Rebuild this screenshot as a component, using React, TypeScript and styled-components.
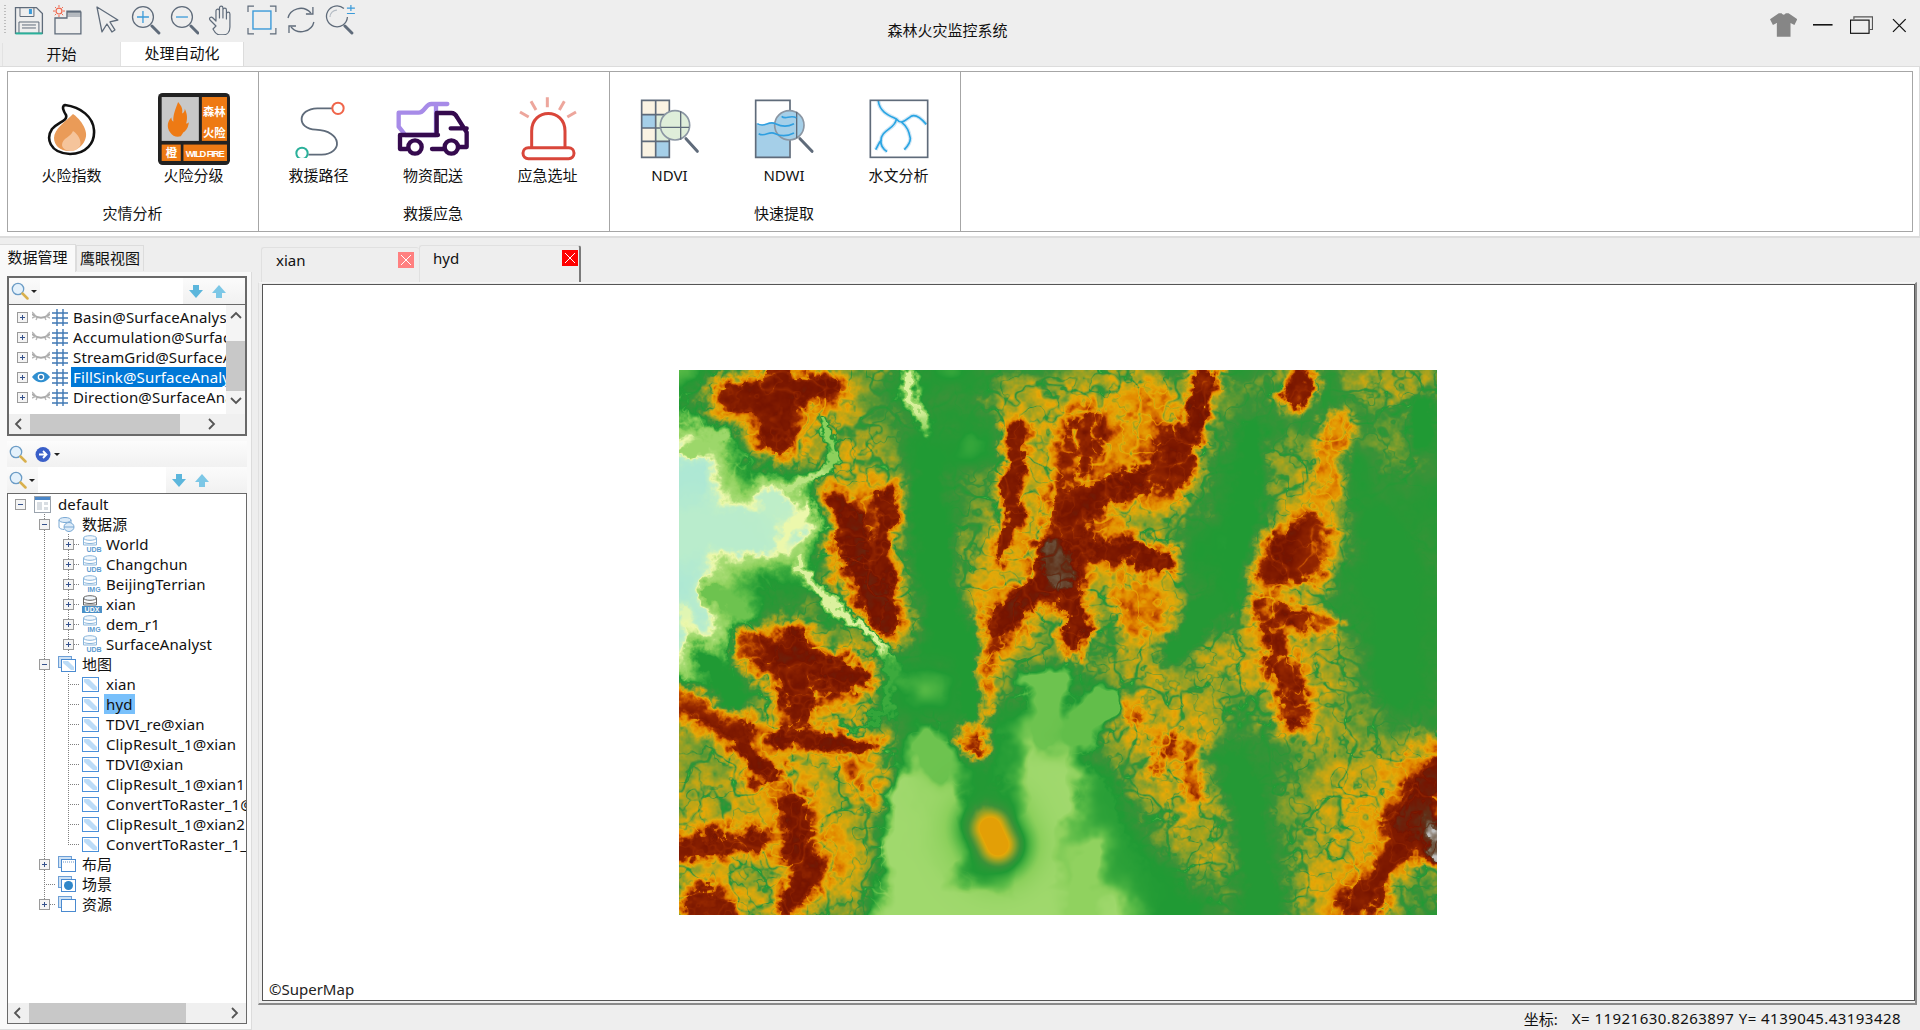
import React, { useLayoutEffect, useRef } from "react";
import styled, { createGlobalStyle } from "styled-components";

const GlobalStyle = createGlobalStyle`
  html, body { margin: 0; padding: 0; background: #eeeeee; overflow: hidden; }
  body { font-family: "Noto Sans", "Noto Sans CJK SC", sans-serif; font-size: 15px; color: #111; }
`;

/* ---------- terrain drawn at runtime ---------- */
type Seg = [number, number, number, number, number, number];

const BROAD: Seg[] = [
  [0.62, 0.62, 0.72, 0.85, 0.56, 62], [0.74, 0.5, 0.88, 0.58, 0.55, 55], [0.8, 0.2, 0.87, 0.3, 0.5, 36],
  [0.56, 0.1, 0.62, 0.22, 0.58, 40], [0.44, 0.05, 0.58, 0.03, 0.52, 34], [0.12, 0.75, 0.22, 0.9, 0.6, 60],
  [0.02, 0.8, 0.06, 0.92, 0.52, 42], [0.55, 0.28, 0.62, 0.45, 0.58, 40], [0.92, 0.75, 0.86, 0.95, 0.56, 56],
  [0.07, 0.08, 0.2, 0.12, 0.52, 34], [0.25, 0.2, 0.27, 0.45, 0.55, 36], [0.15, 0.55, 0.2, 0.62, 0.56, 44],
  [0.9, 0.0, 0.98, 0.04, 0.52, 30], [0.4, 0.35, 0.43, 0.5, 0.56, 34], [0.36, 0.34, 0.37, 0.42, 0.54, 22],
];

const HILLS: Seg[] = [
  [0.07, 0.05, 0.19, 0.03, 0.84, 24], [0.135, 0.0, 0.13, 0.13, 0.84, 20],
  [0.21, 0.25, 0.27, 0.47, 0.86, 20], [0.27, 0.24, 0.265, 0.4, 0.84, 15],
  [0.09, 0.515, 0.22, 0.56, 0.85, 22], [0.15, 0.5, 0.16, 0.62, 0.84, 20],
  [0.0, 0.6, 0.08, 0.66, 0.84, 20], [0.13, 0.67, 0.25, 0.69, 0.84, 12], [0.08, 0.7, 0.12, 0.74, 0.84, 12],
  [0.0, 0.87, 0.1, 0.86, 0.82, 14], [0.15, 0.8, 0.15, 0.87, 0.84, 17], [0.17, 0.9, 0.15, 0.97, 0.84, 18],
  [0.03, 0.98, 0.06, 1.0, 0.82, 22], [0.24, 0.72, 0.26, 0.76, 0.7, 22],
  [0.5, 0.33, 0.5, 0.37, 0.94, 26], [0.45, 0.12, 0.43, 0.33, 0.82, 14], [0.54, 0.11, 0.51, 0.26, 0.78, 26],
  [0.61, 0.2, 0.51, 0.27, 0.84, 17], [0.64, 0.35, 0.52, 0.32, 0.84, 15], [0.49, 0.38, 0.41, 0.47, 0.86, 18],
  [0.41, 0.47, 0.385, 0.68, 0.76, 12], [0.5, 0.38, 0.525, 0.49, 0.84, 15], [0.6, 0.42, 0.62, 0.47, 0.68, 22],
  [0.62, 0.06, 0.6, 0.2, 0.66, 20],
  [0.7, 0.01, 0.65, 0.17, 0.84, 15], [0.65, 0.16, 0.65, 0.2, 0.82, 22], [0.82, 0.01, 0.81, 0.05, 0.82, 12],
  [0.87, 0.1, 0.85, 0.22, 0.66, 14],
  [0.8, 0.33, 0.83, 0.3, 0.86, 24], [0.79, 0.37, 0.83, 0.36, 0.84, 20],
  [0.77, 0.44, 0.85, 0.46, 0.8, 12], [0.78, 0.44, 0.81, 0.63, 0.8, 15],
  [0.68, 0.69, 0.68, 0.78, 0.76, 11], [0.65, 0.68, 0.63, 0.72, 0.74, 9], [0.58, 0.6, 0.6, 0.63, 0.72, 9],
  [1.0, 0.73, 0.97, 0.82, 0.88, 28], [0.97, 0.82, 0.9, 0.98, 0.82, 20], [1.0, 0.84, 1.0, 0.88, 0.98, 13],
];

const CARVES: Seg[] = [
  [0.0, 0.18, 0.0, 0.47, 0.02, 46], [0.02, 0.3, 0.12, 0.29, 0.07, 34], [0.12, 0.24, 0.15, 0.3, 0.09, 16],
  [0.0, 0.45, 0.03, 0.52, 0.12, 14], [0.3, 0.0, 0.325, 0.11, 0.14, 7], [0.0, 0.15, 0.06, 0.13, 0.2, 9],
  [0.16, 0.25, 0.13, 0.32, 0.13, 7], [0.14, 0.22, 0.2, 0.17, 0.16, 5], [0.2, 0.17, 0.2, 0.1, 0.24, 5],
  [0.16, 0.35, 0.27, 0.53, 0.14, 6], [0.27, 0.53, 0.28, 0.63, 0.32, 5], [0.28, 0.63, 0.22, 0.65, 0.33, 4],
  [0.04, 0.4, 0.09, 0.44, 0.27, 13], [0.03, 0.52, 0.07, 0.6, 0.35, 18],
  [0.76, 0.12, 0.72, 0.42, 0.35, 22], [0.7, 0.43, 0.65, 0.52, 0.36, 18], [0.93, 0.3, 0.95, 0.56, 0.36, 52],
  [0.33, 0.16, 0.35, 0.5, 0.35, 24], [0.37, 0.5, 0.38, 0.62, 0.35, 16], [0.74, 0.72, 0.77, 1.0, 0.36, 30],
  [0.6, 0.92, 0.66, 1.0, 0.35, 28], [0.98, 0.08, 0.98, 0.12, 0.35, 20], [0.42, 0.7, 0.39, 0.78, 0.36, 14],
  [0.55, 0.78, 0.58, 0.95, 0.34, 28],
];

/* basin is drawn after the carves with a slow warp so its edge stays soft */
const BASIN: Seg[] = [
  [0.32, 0.78, 0.31, 1.0, 0.19, 32], [0.3, 1.0, 0.55, 1.0, 0.19, 26], [0.49, 0.7, 0.47, 0.93, 0.19, 26],
  [0.33, 0.74, 0.36, 0.88, 0.2, 20], [0.54, 0.88, 0.53, 1.0, 0.23, 18], [0.48, 0.58, 0.49, 0.66, 0.27, 20],
  [0.56, 0.6, 0.53, 0.66, 0.28, 16], [0.32, 0.69, 0.34, 0.72, 0.27, 18],
];

const LATE: Seg[] = [[0.41, 0.84, 0.42, 0.87, 0.36, 34], [0.41, 0.84, 0.42, 0.87, 0.6, 16]];

const RAMP: [number, number, number, number][] = [
  [0, 168, 230, 216], [0.09, 190, 238, 200], [0.13, 236, 248, 172], [0.17, 168, 220, 116], [0.24, 140, 208, 92],
  [0.29, 88, 186, 70], [0.35, 32, 154, 52], [0.41, 58, 146, 56], [0.47, 130, 158, 44], [0.53, 190, 165, 22],
  [0.58, 228, 168, 8], [0.65, 226, 138, 0], [0.71, 202, 88, 0], [0.76, 150, 40, 0], [0.85, 118, 20, 0],
  [0.92, 96, 48, 24], [0.97, 110, 90, 70], [1, 190, 190, 190],
];

function hash(x: number, y: number) {
  const s = Math.sin(x * 127.1 + y * 311.7) * 43758.5453;
  return s - Math.floor(s);
}

function noise(x: number, y: number) {
  const ix = Math.floor(x), iy = Math.floor(y);
  const fx = x - ix, fy = y - iy;
  const ux = fx * fx * (3 - 2 * fx), uy = fy * fy * (3 - 2 * fy);
  const a = hash(ix, iy), b = hash(ix + 1, iy), c = hash(ix, iy + 1), d = hash(ix + 1, iy + 1);
  return a + (b - a) * ux + (c - a) * uy + (a - b - c + d) * ux * uy;
}

function fbm(x: number, y: number, octaves: number) {
  let sum = 0, amp = 0.5, norm = 0;
  for (let i = 0; i < octaves; i++) {
    sum += amp * noise(x, y);
    norm += amp;
    amp *= 0.5;
    x = x * 2.03 + 17;
    y = y * 2.03 + 9;
  }
  return sum / norm;
}

function segFalloff(px: number, py: number, s: Seg, W: number, H: number) {
  const ax = s[0] * W, ay = s[1] * H, bx = s[2] * W, by = s[3] * H;
  const dx = bx - ax, dy = by - ay;
  const len = dx * dx + dy * dy;
  const t = len === 0 ? 0 : Math.max(0, Math.min(1, ((px - ax) * dx + (py - ay) * dy) / len));
  const ex = px - ax - t * dx, ey = py - ay - t * dy;
  const q = (ex * ex + ey * ey) / (s[5] * s[5]);
  return q > 6 ? 0 : Math.exp(-q);
}

// cuts side valleys into the slopes, close to zero away from the valley lines
function valley(x: number, y: number, scale: number, width: number, seed: number) {
  const v = Math.abs(2 * fbm(x / scale + seed, y / scale + seed * 2, 3) - 1);
  return v > width ? 0 : 1 - v / width;
}

function paintTerrain(canvas: HTMLCanvasElement) {
  const W = canvas.width, H = canvas.height;
  const ctx = canvas.getContext("2d");
  if (!ctx) return;
  const img = ctx.createImageData(W, H);
  for (let y = 0; y < H; y++) {
    for (let x = 0; x < W; x++) {
      const wx = x + (fbm(x / 30, y / 30, 3) - 0.5) * 24 + (fbm(x / 6 + 40, y / 6, 3) - 0.5) * 14;
      const wy = y + (fbm(x / 30 + 70, y / 30 + 30, 3) - 0.5) * 24 + (fbm(x / 6, y / 6 + 60, 3) - 0.5) * 14;
      let e = 0.39 + (fbm(x / 60 + 5, y / 60 + 5, 3) - 0.5) * 0.3;
      for (const s of BROAD) {
        const c = segFalloff(wx, wy, s, W, H);
        if (c > 0 && s[4] > e) e += c * (s[4] - e);
      }
      for (const s of HILLS) {
        const c = segFalloff(wx, wy, s, W, H);
        if (c > 0 && s[4] > e) e += Math.min(1, c * 1.25) * (s[4] - e);
      }
      const jag = fbm(x / 9 + 3, y / 9 + 8, 3) - 0.5;
      const slope = Math.min(1, Math.max(0, (e - 0.36) / 0.16));
      e += jag * 0.2 * slope * (e > 0.8 ? 0.4 : 1);
      // side valleys are weakest on the crest so the dark core survives
      const crest = e > 0.78 ? 0.5 : 1;
      e -= slope * crest * (valley(x, y, 34, 0.09, 3) * 0.12 + valley(x, y, 15, 0.12, 11) * 0.08);
      for (const s of CARVES) {
        const c = segFalloff(wx, wy, s, W, H);
        if (c > 0) e += Math.min(1, c * 1.2) * (s[4] - e);
      }
      const sx = x + (fbm(x / 24 + 9, y / 24, 3) - 0.5) * 30, sy = y + (fbm(x / 24, y / 24 + 9, 3) - 0.5) * 30;
      for (const s of BASIN) {
        const c = segFalloff(sx, sy, s, W, H);
        if (c > 0) e += Math.min(1, c * 1.7) * (s[4] - e);
      }
      for (const s of LATE) {
        const c = segFalloff(x, y, s, W, H);
        if (c > 0 && s[4] > e) e += Math.min(1, c * 1.5) * (s[4] - e);
      }
      e = Math.max(0, Math.min(1, e));
      let k = 1;
      while (k < RAMP.length - 1 && RAMP[k][0] < e) k++;
      const a = RAMP[k - 1], b = RAMP[k];
      const t = (e - a[0]) / (b[0] - a[0]);
      const o = (y * W + x) * 4;
      img.data[o] = a[1] + (b[1] - a[1]) * t;
      img.data[o + 1] = a[2] + (b[2] - a[2]) * t;
      img.data[o + 2] = a[3] + (b[3] - a[3]) * t;
      img.data[o + 3] = 255;
    }
  }
  ctx.putImageData(img, 0, 0);
}

function Terrain() {
  const ref = useRef<HTMLCanvasElement>(null);
  useLayoutEffect(() => {
    if (ref.current) paintTerrain(ref.current);
  }, []);
  return <TerrainCanvas ref={ref} width={758} height={545} />;
}

/* ---------- small icons ---------- */
const SLATE = "#5f6b7a";

const toolIcons: React.ReactNode[] = [
  <svg key="save" width="30" height="30" viewBox="0 0 30 30" fill="none">
    <path d="M1.5 2.5h21l6 6v20h-27z" stroke={SLATE} strokeWidth="1.3" />
    <path d="M6 2.5v9h14v-9M5 28v-11h20v11M8 20h14M8 23h14" stroke={SLATE} strokeWidth="1" />
    <rect x="15" y="4" width="3" height="5" fill="#3a9ad9" />
    <rect x="1.5" y="27.5" width="27" height="2" fill="#2ab09a" />
  </svg>,
  <svg key="open" width="30" height="30" viewBox="0 0 30 30" fill="none">
    <path d="M2 13v16h26V7H14v6zM14 7v-1h14" stroke={SLATE} strokeWidth="1.3" />
    <path d="M14 11h14M14 9h14" stroke={SLATE} strokeWidth=".8" />
    <circle cx="6" cy="6" r="3" stroke="#f0654a" strokeWidth="1.2" />
    <path d="M6 0v2M6 10v2M0 6h2M10 6h2M2 2l1.2 1.2M9 9l1.2 1.2M10 2L8.8 3.2M3 9l-1.2 1.2" stroke="#f0654a" strokeWidth="1" />
  </svg>,
  <svg key="arrow" width="30" height="30" viewBox="0 0 30 30" fill="none">
    <path d="M5 2l5 25 5-8 5 8 3-2-5-8 8-2z" stroke={SLATE} strokeWidth="1.3" strokeLinejoin="round" />
  </svg>,
  <svg key="in" width="30" height="30" viewBox="0 0 30 30" fill="none">
    <circle cx="12" cy="12" r="10.5" stroke={SLATE} strokeWidth="1.3" />
    <path d="M12 6v12M6 12h12" stroke="#3a9ad9" strokeWidth="1.3" />
    <path d="M21 21l7 7" stroke={SLATE} strokeWidth="3" strokeLinecap="round" />
  </svg>,
  <svg key="out" width="30" height="30" viewBox="0 0 30 30" fill="none">
    <circle cx="12" cy="12" r="10.5" stroke={SLATE} strokeWidth="1.3" />
    <path d="M6 12h12" stroke="#3a9ad9" strokeWidth="1.3" />
    <path d="M21 21l7 7" stroke={SLATE} strokeWidth="3" strokeLinecap="round" />
  </svg>,
  <svg key="hand" width="30" height="30" viewBox="0 0 30 30" fill="none">
    <path d="M8 21L2 15c-1.5-2 1-4 3-2l3 3V6c0-2.500 3.500-2.500 3.500 0v7-10c0-2.500 3.500-2.500 3.500 0v10-8c0-2.500 3.500-2.500 3.500 0v9-5c0-2.500 3.500-2.500 3.500 0v13c0 5-3 8-7 8h-3c-3 0-5-2-7-6z" stroke={SLATE} strokeWidth="1.2" strokeLinejoin="round" />
  </svg>,
  <svg key="full" width="30" height="30" viewBox="0 0 30 30" fill="none">
    <path d="M1 7V1h6M23 1h6v6M29 23v6h-6M7 29H1v-6" stroke={SLATE} strokeWidth="1.2" />
    <rect x="6" y="6" width="18" height="18" stroke="#3a9ad9" strokeWidth="1.4" />
  </svg>,
  <svg key="refresh" width="30" height="30" viewBox="0 0 30 30" fill="none">
    <path d="M2 13C4 4 17-1 25 8M28 17c-2 9-15 14-23 5" stroke={SLATE} strokeWidth="1.3" />
    <path d="M27 2v7h-7M3 28v-7h7" stroke={SLATE} strokeWidth="1.3" />
  </svg>,
  <svg key="zoomset" width="30" height="30" viewBox="0 0 30 30" fill="none">
    <path d="M19 3.5A10.5 10.5 0 1 0 22.5 12" stroke={SLATE} strokeWidth="1.3" />
    <path d="M5 12a7 7 0 0 1 7-7" stroke="#b5bcc4" strokeWidth="1.2" />
    <path d="M22 3h8M26 0v6M22 8.500h8" stroke="#3a9ad9" strokeWidth="1.2" />
    <path d="M20 21l7 7" stroke={SLATE} strokeWidth="3" strokeLinecap="round" />
  </svg>,
];

function FlameIcon() {
  return (
    <svg width="50" height="54" viewBox="0 0 50 54" fill="none">
      <path d="M18 3c-4 1-1 7 1 10 2 6-8 7-14 14-6 9-3 24 18 25 16 0 25-11 24-24C46 15 34 5 18 3z" fill="#fff" stroke="#111" strokeWidth="2.6" strokeLinejoin="round" />
      <path d="M7 36c0-9 12-17 19-24 5 3 17 16 12 26-3 8-11 11-16 11-9 0-15-6-15-13z" fill="#ea9b58" />
      <path d="M15 43c0-7 9-8 11-14 5 3 9 10 7 15-2 3-5 5-9 5-5 0-9-3-9-6z" fill="#f5c49b" />
    </svg>
  );
}

function WildFireIcon() {
  return (
    <svg width="72" height="72" viewBox="475 280 215 215">
      <rect x="475" y="280" width="215" height="215" rx="14" fill="#222" />
      <rect x="486" y="292" width="111" height="131" fill="#c8c8c8" />
      <path d="M535 307c12 14 14 22 12 34 6-2 8-8 8-14 8 16 8 30 4 44 3 0 6-2 8-4-1 14-8 26-16 30l-8 12c-12 4-24 0-32-12-12-16-6-36 4-44 0 6 2 10 6 12-2-18 6-36 14-58z" fill="#ee7a14" />
      <rect x="606" y="292" width="75" height="131" fill="#ee7a14" />
      <rect x="486" y="434" width="57" height="49" fill="#ee7a14" />
      <rect x="551" y="434" width="130" height="49" fill="#ee7a14" />
      <g fill="#fff" fontFamily="'Noto Sans CJK SC', sans-serif" fontWeight="700" textAnchor="middle">
        <text x="643" y="350" fontSize="34">森林</text>
        <text x="643" y="410" fontSize="34">火险</text>
        <text x="515" y="472" fontSize="34">橙</text>
      </g>
      <text x="616" y="470" fill="#fff" fontFamily="'Liberation Sans', sans-serif" fontWeight="700" fontSize="28" textAnchor="middle" textLength="116">WILD FIRE</text>
    </svg>
  );
}

function RouteIcon() {
  return (
    <svg width="52" height="58" viewBox="100 118 156 174" fill="none">
      <path d="M218 143h-45c-62 2-62 62-5 64 82 3 82 73 18 75h-40" stroke={SLATE} strokeWidth="5.5" />
      <circle cx="235" cy="143" r="17" fill="#fff" stroke="#f0654a" strokeWidth="6" />
      <circle cx="127" cy="278" r="17" fill="#fff" stroke="#2ab09a" strokeWidth="6" />
    </svg>
  );
}

function TruckIcon() {
  return (
    <svg width="74" height="56" viewBox="408 124 222 168" fill="none">
      <path d="M562 133h-48c-18 0-20 26-38 26h-60v42l20 25h92V134" stroke="#a78be8" strokeWidth="13" strokeLinecap="round" strokeLinejoin="round" />
      <path d="M530 226v-66h44c8 0 14 6 18 14l28 44v44h-24M572 206h48M516 268h36M440 268h-20v-42h114" stroke="#350a4e" strokeWidth="13" strokeLinecap="round" strokeLinejoin="round" />
      <circle cx="465" cy="262" r="20" stroke="#350a4e" strokeWidth="13" />
      <circle cx="574" cy="262" r="20" stroke="#350a4e" strokeWidth="13" />
    </svg>
  );
}

function AlarmIcon() {
  return (
    <svg width="60" height="66" viewBox="775 110 180 198" fill="none">
      <rect x="790" y="265" width="153" height="33" rx="16" stroke="#d9463a" strokeWidth="9" />
      <path d="M816 265v-50c0-70 100-70 100 0v50" stroke="#d9463a" strokeWidth="9" />
      <path d="M863 114v30M814 126l15 26M914 126l-15 26M781 158l26 15M949 158l-26 15" stroke="#eda69c" strokeWidth="9" />
    </svg>
  );
}

function NdviIcon() {
  return (
    <svg width="60" height="60" viewBox="120 118 180 180" fill="none">
      <rect x="125" y="122" width="42" height="43" fill="#faf3e3" /><rect x="167" y="122" width="41" height="43" fill="#faf3e3" />
      <rect x="125" y="165" width="42" height="40" fill="#a5cfe8" /><rect x="167" y="165" width="41" height="40" fill="#dfeeda" />
      <rect x="125" y="205" width="42" height="40" fill="#faf3e3" /><rect x="167" y="205" width="41" height="40" fill="#dfeeda" />
      <rect x="125" y="245" width="42" height="48" fill="#faf3e3" /><rect x="167" y="245" width="41" height="48" fill="#a5cfe8" />
      <path d="M125 122h83v171h-83zM167 122v171M125 165h83M125 205h83M125 245h83" stroke={SLATE} strokeWidth="5" />
      <circle cx="225" cy="197" r="44" fill="#dfeeda" stroke="#8b96a3" strokeWidth="5" />
      <path d="M242 155v85M182 203h85" stroke={SLATE} strokeWidth="4" />
      <path d="M258 237l34 38" stroke={SLATE} strokeWidth="9" strokeLinecap="round" />
    </svg>
  );
}

function NdwiIcon() {
  return (
    <svg width="60" height="60" viewBox="462 118 180 180" fill="none">
      <path d="M468 190c30 16 50-14 100 0v103H468z" fill="#a5cfe8" />
      <path d="M467 122h103v171H467z" stroke={SLATE} strokeWidth="5" />
      <circle cx="568" cy="197" r="44" fill="#a5cfe8" stroke="#8b96a3" strokeWidth="5" />
      <path d="M590 156v80" stroke={SLATE} strokeWidth="4" />
      <path d="M472 192c22 14 32-10 54 0s36 10 56 0M476 222c20 12 30-10 50 0s36 8 56-2M545 170c12 12 24-6 44 4" stroke="#2f9fe0" strokeWidth="5" />
      <path d="M600 237l36 38" stroke={SLATE} strokeWidth="9" strokeLinecap="round" />
    </svg>
  );
}

function HydroIcon() {
  const rivers = "M836 124c4 34 34 44 54 54-2 30-46 32-46 64-2 14 4 24 18 34M828 270c6-10 10-22 18-30M890 178c16 20 28 2 44-8 14-8 34 10 46 24M904 186c20 16 24 30 28 50 0 16-10 26-18 34";
  return (
    <svg width="60" height="60" viewBox="808 118 180 180" fill="none">
      <rect x="812" y="122" width="172" height="171" fill="#fff" />
      <path d={rivers} stroke="#cfe6f5" strokeWidth="12" />
      <path d={rivers} stroke="#29a5e3" strokeWidth="5" />
      <rect x="812" y="122" width="172" height="171" stroke={SLATE} strokeWidth="5" />
    </svg>
  );
}

function SearchGlass() {
  return (
    <svg width="18" height="18" viewBox="0 0 18 18" fill="none">
      <circle cx="7" cy="7" r="5.7" fill="#e4f1fb" stroke="#6b9cc6" strokeWidth="1.3" />
      <path d="M11.500 11.500l5 5" stroke="#d9b04c" strokeWidth="2.500" strokeLinecap="round" />
    </svg>
  );
}

function ArrowDown() {
  return (
    <svg width="14" height="13" viewBox="0 0 14 13">
      <path d="M4 0h6v5h4l-7 8-7-8h4z" fill="#5cb6dc" />
    </svg>
  );
}

function ArrowUp() {
  return (
    <svg width="14" height="13" viewBox="0 0 14 13">
      <path d="M4 13h6V8h4L7 0 0 8h4z" fill="#7cc7e6" />
    </svg>
  );
}

function Chevron({ dir }: { dir: "left" | "right" | "up" | "down" }) {
  const d = { left: "M7 1L2 6l5 5", right: "M2 1l5 5-5 5", up: "M1 7l5-5 5 5", down: "M1 2l5 5 5-5" }[dir];
  return (
    <svg width="12" height="12" viewBox="0 0 12 12" fill="none">
      <path d={d} stroke="#555" strokeWidth="1.8" />
    </svg>
  );
}

function EyeIcon({ open }: { open: boolean }) {
  return open ? (
    <svg width="18" height="12" viewBox="0 0 18 12">
      <path d="M0 6c5-7 13-7 18 0-5 7-13 7-18 0z" fill="#2f8fd0" />
      <circle cx="9" cy="6" r="3.3" fill="#fff" />
      <circle cx="9" cy="6" r="2" fill="#2f78b5" />
    </svg>
  ) : (
    <svg width="18" height="12" viewBox="0 0 18 12" fill="none">
      <path d="M0 3c6 5 12 5 18 0" stroke="#a9a9a9" strokeWidth="2" />
      <path d="M0 1l3 3M18 1l-3 3M0 7l4-2M18 7l-4-2M5 7L4 9M13 7l1 2" stroke="#b5b5b5" strokeWidth="1.4" />
    </svg>
  );
}

function GridIcon() {
  return (
    <svg width="16" height="17" viewBox="0 0 16 17" fill="none">
      <path d="M5 0v17M11 0v17M0 4h16M0 9h16M0 14h16" stroke="#3f78b4" strokeWidth="1.4" />
    </svg>
  );
}

function Expander({ open }: { open: boolean }) {
  return (
    <svg width="11" height="11" viewBox="0 0 11 11">
      <rect x=".5" y=".5" width="10" height="10" fill="#f4f4f4" stroke="#9a9a9a" />
      <path d={open ? "M3 5.500h5" : "M3 5.500h5M5.500 3v5"} stroke="#34518c" strokeWidth="1" />
    </svg>
  );
}

function WorkspaceIcon() {
  return (
    <svg width="17" height="17" viewBox="0 0 17 17">
      <rect x=".5" y=".5" width="16" height="16" fill="#fff" stroke="#9aa3ad" />
      <rect x="1" y="1" width="15" height="3" fill="#4a86c8" />
      <rect x="3" y="6" width="5" height="8" fill="#d8dde2" />
      <rect x="10" y="6" width="4" height="3" fill="#d8dde2" />
      <rect x="10" y="11" width="4" height="3" fill="#d8dde2" />
    </svg>
  );
}

function SourcesIcon() {
  return (
    <svg width="17" height="17" viewBox="0 0 17 17" fill="none">
      <ellipse cx="7" cy="4" rx="6" ry="2.5" fill="#dcebf8" stroke="#7aa9d4" />
      <path d="M1 4v7c0 1.500 3 2.500 5 2.500M13 4v3" stroke="#7aa9d4" />
      <ellipse cx="11" cy="11" rx="5" ry="4.5" fill="#dcebf8" stroke="#7aa9d4" />
      <path d="M6 11h10" stroke="#7aa9d4" />
    </svg>
  );
}

function DbIcon({ tag, dark }: { tag: string; dark?: boolean }) {
  const line = dark ? "#666" : "#8ab6dc";
  return (
    <svg width="20" height="18" viewBox="0 0 20 18" fill="none">
      <ellipse cx="8" cy="3" rx="6.5" ry="2.3" fill="#f2f7fc" stroke={line} />
      <path d="M1.500 3v7h13V3M1.500 7c2 2 11 2 13 0" stroke={line} />
      {dark && <rect x="0" y="11" width="20" height="7" fill="#4a8fc6" />}
      <text x={dark ? "10" : "12"} y="17" fontSize="7" fontWeight="700" fontFamily="'Liberation Sans', sans-serif" textAnchor="middle" fill={dark ? "#fff" : "#5a9ad0"}>{tag}</text>
    </svg>
  );
}

function MapIcon() {
  return (
    <svg width="17" height="15" viewBox="0 0 17 15">
      <rect x=".5" y=".5" width="16" height="14" fill="#fff" stroke="#4a90d9" />
      <path d="M2 2h5l8 8v3h-4L2 5z" fill="#bcdcf7" />
    </svg>
  );
}

function FolderStack({ inner }: { inner?: "map" | "layout" | "scene" | "folder" }) {
  return (
    <svg width="18" height="16" viewBox="0 0 18 16" fill="none">
      <rect x=".5" y=".5" width="13" height="11" fill="#cfe2f5" stroke="#6d9fd6" />
      <rect x="3.5" y="3.5" width="14" height="12" fill="#fff" stroke="#4a8ad0" />
      {inner === "map" && <path d="M5 5h5l6 6v3h-3L5 7z" fill="#bcdcf7" />}
      {inner === "layout" && <path d="M5 6h11" stroke="#9bb9da" strokeWidth="1.5" strokeDasharray="1 1" />}
      {inner === "scene" && <circle cx="10.5" cy="9.5" r="4.5" fill="#2f86c9" />}
    </svg>
  );
}

function ShirtIcon() {
  return (
    <svg width="28" height="24" viewBox="0 0 28 24">
      <path d="M9 0h3c1 2 3 2 4 0h3l9 6-3 6-4-2v14H7V10l-4 2-3-6z" fill="#868686" />
    </svg>
  );
}

/* ---------- data ---------- */
const layers = [
  { name: "Basin@SurfaceAnalyst_1" },
  { name: "Accumulation@SurfaceAnalyst" },
  { name: "StreamGrid@SurfaceAnalyst" },
  { name: "FillSink@SurfaceAnalyst", on: true },
  { name: "Direction@SurfaceAnalyst" },
];

type Line = "none" | "full" | "tee" | "end";

interface Node {
  label: string;
  cols: { line: Line; exp?: "open" | "closed" }[];
  icon: React.ReactNode;
  active?: boolean;
}

const C0 = { line: "none" as Line };
const C1 = { line: "full" as Line };

function mapNode(label: string, last?: boolean, active?: boolean): Node {
  return { label, active, icon: <MapIcon />, cols: [C0, C1, { line: last ? "end" : "tee" }] };
}

function dbNode(label: string, icon: React.ReactNode): Node {
  return { label, icon, cols: [C0, C1, { line: "tee", exp: "closed" }] };
}

const tree: Node[] = [
  { label: "default", icon: <WorkspaceIcon />, cols: [{ line: "none", exp: "open" }] },
  { label: "数据源", icon: <SourcesIcon />, cols: [C0, { line: "full", exp: "open" }] },
  dbNode("World", <DbIcon tag="UDB" />),
  dbNode("Changchun", <DbIcon tag="UDB" />),
  dbNode("BeijingTerrian", <DbIcon tag="IMG" />),
  dbNode("xian", <DbIcon tag="UDX" dark />),
  dbNode("dem_r1", <DbIcon tag="IMG" />),
  dbNode("SurfaceAnalyst", <DbIcon tag="UDB" />),
  { label: "地图", icon: <FolderStack inner="map" />, cols: [C0, { line: "full", exp: "open" }] },
  mapNode("xian"),
  mapNode("hyd", false, true),
  mapNode("TDVI_re@xian"),
  mapNode("ClipResult_1@xian"),
  mapNode("TDVI@xian"),
  mapNode("ClipResult_1@xian1"),
  mapNode("ConvertToRaster_1@xian"),
  mapNode("ClipResult_1@xian2"),
  mapNode("ConvertToRaster_1_1@xian", true),
  { label: "布局", icon: <FolderStack inner="layout" />, cols: [C0, { line: "full", exp: "closed" }] },
  { label: "场景", icon: <FolderStack inner="scene" />, cols: [C0, { line: "tee" }] },
  { label: "资源", icon: <FolderStack inner="folder" />, cols: [C0, { line: "end", exp: "closed" }] },
];

const ribbon = [
  {
    title: "灾情分析", width: 250, itemWidth: 122, items: [
      { label: "火险指数", icon: <FlameIcon /> },
      { label: "火险分级", icon: <WildFireIcon /> },
    ],
  },
  {
    title: "救援应急", width: 351, itemWidth: 114.5, items: [
      { label: "救援路径", icon: <RouteIcon /> },
      { label: "物资配送", icon: <TruckIcon /> },
      { label: "应急选址", icon: <AlarmIcon /> },
    ],
  },
  {
    title: "快速提取", width: 351, itemWidth: 114.5, items: [
      { label: "NDVI", icon: <NdviIcon /> },
      { label: "NDWI", icon: <NdwiIcon /> },
      { label: "水文分析", icon: <HydroIcon /> },
    ],
  },
];

/* ---------- app ---------- */
export default function App() {
  return (
    <Page>
      <GlobalStyle />
      <TitleBar>
        <Grip />
        <QuickTools>
          {toolIcons.map((icon, i) => <React.Fragment key={i}>{icon}</React.Fragment>)}
        </QuickTools>
        <Title>森林火灾监控系统</Title>
        <WindowButtons>
          <ShirtIcon />
          <svg width="20" height="4" viewBox="0 0 20 4"><rect y="1" width="20" height="1.6" fill="#111" /></svg>
          <svg width="24" height="18" viewBox="0 0 24 18" fill="none">
            <rect x=".5" y="4" width="19" height="13.5" stroke="#111" strokeWidth="1.2" />
            <path d="M4 3V.6h19v13h-3" stroke="#555" strokeWidth="1.2" />
          </svg>
          <svg width="15" height="15" viewBox="0 0 15 15"><path d="M1 1l13 13M14 1L1 14" stroke="#111" strokeWidth="1.3" /></svg>
        </WindowButtons>
      </TitleBar>

      <RibbonTabs>
        <RibbonTab>开始</RibbonTab>
        <RibbonTab $active>处理自动化</RibbonTab>
      </RibbonTabs>

      <Ribbon>
        <RibbonBox>
          {ribbon.map(section => (
            <RibbonSection key={section.title} $width={section.width}>
              <RibbonItems>
                {section.items.map(item => (
                  <RibbonItem key={item.label} $width={section.itemWidth}>
                    <RibbonIcon>{item.icon}</RibbonIcon>
                    <span>{item.label}</span>
                  </RibbonItem>
                ))}
              </RibbonItems>
              <SectionTitle>{section.title}</SectionTitle>
            </RibbonSection>
          ))}
        </RibbonBox>
      </Ribbon>

      <Main>
        <SidePanel>
          <SideTabs>
            <SideTab $active>数据管理</SideTab>
            <SideTab>鹰眼视图</SideTab>
          </SideTabs>
          <SideBody>
            <LayerBox>
              <SearchBar>
                <SearchButton><SearchGlass /><CaretMark /></SearchButton>
                <SearchSpacer />
                <SearchArrows $width={62}><ArrowDown /><ArrowUp /></SearchArrows>
              </SearchBar>
              <LayerArea>
                <LayerList>
                  {layers.map(layer => (
                    <LayerRow key={layer.name}>
                      <Expander open={false} />
                      <EyeIcon open={!!layer.on} />
                      <GridIcon />
                      <LayerName $selected={layer.on}>{layer.name}</LayerName>
                    </LayerRow>
                  ))}
                </LayerList>
                <VScroll>
                  <Chevron dir="up" />
                  <VThumb />
                  <Chevron dir="down" />
                </VScroll>
              </LayerArea>
              <HScroll $arrowGap={26}>
                <Chevron dir="left" />
                <HThumb $left={4} $width={150} />
                <HEnd><Chevron dir="right" /></HEnd>
              </HScroll>
            </LayerBox>

            <PlainBar>
              <SearchGlass />
              <svg width="17" height="17" viewBox="0 0 17 17">
                <circle cx="8" cy="8.5" r="7.5" fill="#3a5fc8" />
                <path d="M4 8.500h7M8 5l3.500 3.500L8 12" stroke="#fff" strokeWidth="1.8" fill="none" />
              </svg>
              <CaretMark />
            </PlainBar>
            <SearchBar>
              <SearchButton><SearchGlass /><CaretMark /></SearchButton>
              <SearchSpacer />
              <SearchArrows $width={81}><ArrowDown /><ArrowUp /></SearchArrows>
            </SearchBar>

            <TreeBox>
              <TreeRows>
                {tree.map((node, i) => (
                  <TreeRow key={i}>
                    {node.cols.map((col, j) => (
                      <TreeCell key={j} $line={col.line}>
                        {col.exp && <Expander open={col.exp === "open"} />}
                      </TreeCell>
                    ))}
                    <TreeIcon>{node.icon}</TreeIcon>
                    <TreeLabel $active={node.active}>{node.label}</TreeLabel>
                  </TreeRow>
                ))}
              </TreeRows>
              <HScroll $arrowGap={4}>
                <Chevron dir="left" />
                <HThumb $left={4} $width={157} />
                <HEnd><Chevron dir="right" /></HEnd>
              </HScroll>
            </TreeBox>
          </SideBody>
        </SidePanel>

        <Workspace>
          <DocTabs>
            <DocTab>
              <span>xian</span>
              <CloseBox>
                <svg width="10" height="10" viewBox="0 0 10 10"><path d="M0 0l10 10M10 0L0 10" stroke="#fff" /></svg>
              </CloseBox>
            </DocTab>
            <DocTab $active>
              <span>hyd</span>
              <CloseBox $active>
                <svg width="10" height="10" viewBox="0 0 10 10"><path d="M0 0l10 10M10 0L0 10" stroke="#fff" /></svg>
              </CloseBox>
            </DocTab>
          </DocTabs>
          <MapOuter>
            <MapFrame>
              <Terrain />
              <Credit>©SuperMap</Credit>
            </MapFrame>
          </MapOuter>
          <StatusBar>
            <span>坐标:</span>
            <StatusValue>X= 11921630.8263897 Y= 4139045.43193428</StatusValue>
          </StatusBar>
        </Workspace>
      </Main>
    </Page>
  );
}

/* ---------- styled components ---------- */
const Page = styled.div`
  width: 1920px;
  height: 1030px;
  display: flex;
  flex-direction: column;
  background: #eeeeee;
  overflow: hidden;
`;

const TitleBar = styled.div`
  height: 42px;
  flex: none;
  display: flex;
  align-items: flex-start;
  padding-top: 5px;
  box-sizing: border-box;
`;

const Grip = styled.div`
  width: 2px;
  height: 30px;
  margin: 0 8px 0 4px;
  background: repeating-linear-gradient(to bottom, #bdbdbd 0 1px, transparent 1px 3px);
`;

const QuickTools = styled.div`
  display: flex;
  gap: 9px;
  width: 341px;
`;

const Title = styled.div`
  flex: 1;
  padding: 15px 230px 0 0;
  text-align: center;
  line-height: 20px;
`;

const WindowButtons = styled.div`
  width: 150px;
  height: 32px;
  margin-top: 4px;
  padding-right: 13px;
  box-sizing: border-box;
  display: flex;
  align-items: center;
  justify-content: flex-end;
  gap: 16px;
  & > svg:nth-child(3) { margin-left: 1px; }
  & > svg:last-child { margin-left: 3px; }
`;

const RibbonTabs = styled.div`
  height: 24px;
  flex: none;
  display: flex;
  padding-left: 2px;
`;

const RibbonTab = styled.div<{ $active?: boolean }>`
  width: ${p => (p.$active ? "124px" : "118px")};
  height: 24px;
  box-sizing: border-box;
  text-align: center;
  line-height: 22px;
  background: ${p => (p.$active ? "#fff" : "#eeeeee")};
  border-left: 1px solid #e2e2e2;
  border-right: ${p => (p.$active ? "1px solid #dcdcdc" : "none")};
  margin-top: ${p => (p.$active ? "0" : "1px")};
`;

const Ribbon = styled.div`
  height: 172px;
  flex: none;
  box-sizing: border-box;
  padding: 4px 6px 4px 7px;
  background: #fff;
  border-top: 1px solid #dcdcdc;
  border-bottom: 2px solid #dcdcdc;
  border-right: 1px solid #dcdcdc;
`;

const RibbonBox = styled.div`
  height: 100%;
  box-sizing: border-box;
  border: 1px solid #a6a6a6;
  display: flex;
  padding-left: 1px;
`;

const RibbonSection = styled.div<{ $width: number }>`
  width: ${p => p.$width}px;
  box-sizing: border-box;
  border-right: 1px solid #a6a6a6;
  display: flex;
  flex-direction: column;
  align-items: center;
  padding-right: 2px;
`;

const RibbonItems = styled.div`
  display: flex;
  justify-content: center;
  padding-top: 20px;
`;

const RibbonItem = styled.div<{ $width: number }>`
  width: ${p => p.$width}px;
  display: flex;
  flex-direction: column;
  align-items: center;
  line-height: 20px;
`;

const RibbonIcon = styled.div`
  height: 73px;
  display: flex;
  align-items: center;
  justify-content: center;
`;

const SectionTitle = styled.div`
  margin-top: 18px;
  line-height: 20px;
`;

const Main = styled.div`
  flex: 1;
  display: flex;
  min-height: 0;
`;

const SidePanel = styled.div`
  width: 252px;
  padding-top: 6px;
  box-sizing: border-box;
  display: flex;
  flex-direction: column;
`;

const SideTabs = styled.div`
  height: 28px;
  flex: none;
  display: flex;
  align-items: flex-end;
`;

const SideTab = styled.div<{ $active?: boolean }>`
  height: ${p => (p.$active ? "28px" : "26px")};
  width: ${p => (p.$active ? "76px" : "68px")};
  box-sizing: border-box;
  text-align: center;
  line-height: 24px;
  background: ${p => (p.$active ? "#f9f9f9" : "#eeeeee")};
  border: 1px solid #dcdcdc;
  border-bottom: none;
  border-left: ${p => (p.$active ? "none" : "1px solid #dcdcdc")};
  margin-bottom: ${p => (p.$active ? "0" : "1px")};
`;

const SideBody = styled.div`
  flex: 1;
  min-height: 0;
  box-sizing: border-box;
  background: #f9f9f9;
  border-right: 1px solid #dcdcdc;
  border-bottom: 1px solid #dcdcdc;
  padding: 4px 4px 5px 7px;
  display: flex;
  flex-direction: column;
`;

const LayerBox = styled.div`
  height: 160px;
  flex: none;
  box-sizing: border-box;
  border: 2px solid #696969;
  display: flex;
  flex-direction: column;
  background: #fff;
`;

const SearchBar = styled.div`
  height: 26px;
  flex: none;
  display: flex;
  background: #fff;
`;

const SearchButton = styled.div`
  width: 31px;
  display: flex;
  align-items: center;
  padding-left: 2px;
  box-sizing: border-box;
  background: linear-gradient(to bottom, #fbfbfb, #f1f1f1);
`;

const CaretMark = styled.span`
  width: 0;
  height: 0;
  margin-left: 2px;
  border-left: 3px solid transparent;
  border-right: 3px solid transparent;
  border-top: 3px solid #222;
`;

const SearchSpacer = styled.div`
  flex: 1;
  background: #fff;
`;

const SearchArrows = styled.div<{ $width: number }>`
  width: ${p => p.$width}px;
  display: flex;
  align-items: center;
  gap: 9px;
  padding-left: 6px;
  box-sizing: border-box;
  background: linear-gradient(to bottom, #fbfbfb, #f1f1f1);
`;

const LayerArea = styled.div`
  flex: 1;
  min-height: 0;
  display: flex;
  border-top: 1px solid #696969;
`;

const LayerList = styled.div`
  flex: 1;
  min-width: 0;
  overflow: hidden;
  padding-top: 2px;
`;

const LayerRow = styled.div`
  height: 20px;
  display: flex;
  align-items: center;
  padding-left: 8px;
  gap: 5px;
  white-space: nowrap;
  & > svg:nth-child(2) { margin-left: -1px; }
  & > svg:nth-child(3) { margin-left: -3px; }
`;

const LayerName = styled.span<{ $selected?: boolean }>`
  flex: 1;
  overflow: hidden;
  line-height: 20px;
  padding-left: 2px;
  margin-left: -2px;
  letter-spacing: .15px;
  background: ${p => (p.$selected ? "#0078d7" : "transparent")};
  color: ${p => (p.$selected ? "#fff" : "#111")};
`;

const VScroll = styled.div`
  width: 19px;
  flex: none;
  box-sizing: border-box;
  padding: 6px 0;
  background: #f4f4f4;
  display: flex;
  flex-direction: column;
  align-items: center;
  justify-content: space-between;
`;

const VThumb = styled.div`
  width: 19px;
  height: 50px;
  margin-top: 13px;
  background: #c8c8c8;
`;

const HScroll = styled.div<{ $arrowGap: number }>`
  height: 20px;
  flex: none;
  display: flex;
  align-items: center;
  padding-left: 5px;
  padding-right: ${p => p.$arrowGap}px;
  background: #f0f0f0;
`;

const HThumb = styled.div<{ $left: number; $width: number }>`
  width: ${p => p.$width}px;
  height: 20px;
  margin-left: ${p => p.$left}px;
  background: #c8c8c8;
`;

const HEnd = styled.div`
  flex: 1;
  display: flex;
  justify-content: flex-end;
`;

const PlainBar = styled.div`
  height: 26px;
  margin-top: 5px;
  flex: none;
  display: flex;
  align-items: center;
  gap: 8px;
  padding-left: 2px;
  background: linear-gradient(to bottom, #fcfcfc, #f1f1f1);
  & > span { margin-left: -6px; }
`;

const TreeBox = styled.div`
  flex: 1;
  min-height: 0;
  box-sizing: border-box;
  border: 1px solid #696969;
  background: #fff;
  display: flex;
  flex-direction: column;
`;

const TreeRows = styled.div`
  flex: 1;
  min-height: 0;
  overflow: hidden;
`;

const TreeRow = styled.div`
  height: 20px;
  display: flex;
  align-items: center;
  white-space: nowrap;
`;

const dots = (dir: string) => `repeating-linear-gradient(${dir}, #7f7f7f 0 1px, transparent 1px 2px)`;

const TreeCell = styled.div<{ $line: Line }>`
  width: 24px;
  height: 20px;
  flex: none;
  display: flex;
  align-items: center;
  justify-content: center;
  background-repeat: no-repeat;
  background-image: ${p => {
    if (p.$line === "none") return "none";
    if (p.$line === "full") return dots("to bottom");
    return `${dots("to bottom")}, ${dots("to right")}`;
  }};
  background-size: ${p => {
    if (p.$line === "full") return "1px 20px";
    if (p.$line === "tee") return "1px 20px, 13px 1px";
    return "1px 11px, 13px 1px";
  }};
  background-position: ${p => (p.$line === "full" ? "12px 0" : "12px 0, 12px 10px")};
`;

const TreeIcon = styled.span`
  width: 24px;
  flex: none;
  margin-left: 2px;
  display: flex;
  align-items: center;
`;

const TreeLabel = styled.span<{ $active?: boolean }>`
  line-height: 20px;
  padding: 0 2px;
  margin-left: -2px;
  letter-spacing: .12px;
  background: ${p => (p.$active ? "#78c0fb" : "transparent")};
`;

const Workspace = styled.div`
  flex: 1;
  min-width: 0;
  display: flex;
  flex-direction: column;
  padding: 7px 3px 0 6px;
`;

const DocTabs = styled.div`
  height: 37px;
  flex: none;
  display: flex;
  align-items: flex-end;
  padding-left: 3px;
`;

const DocTab = styled.div<{ $active?: boolean }>`
  width: ${p => (p.$active ? "162px" : "158px")};
  height: ${p => (p.$active ? "37px" : "35px")};
  box-sizing: border-box;
  display: flex;
  justify-content: space-between;
  background: #eeeeee;
  border: 1px solid #e0e0e0;
  border-bottom: none;
  border-right: ${p => (p.$active ? "2px solid #7a7a7a" : "none")};
  border-radius: 3px 3px 0 0;
  padding: ${p => (p.$active ? "0 1px 0 13px" : "0 5px 0 14px")};
  line-height: 24px;
`;

const CloseBox = styled.div<{ $active?: boolean }>`
  width: 16px;
  height: 16px;
  margin-top: 4px;
  display: flex;
  align-items: center;
  justify-content: center;
  background: ${p => (p.$active ? "#ff0000" : "#ff8080")};
`;

const MapOuter = styled.div`
  height: 723px;
  flex: none;
  box-sizing: border-box;
  padding: 1px 0 2px 3px;
  border-right: 2px solid #8a8a8a;
  border-bottom: 2px solid #8a8a8a;
  border-left: 1px solid #e0e0e0;
  border-top: 1px solid #f6f6f6;
`;

const MapFrame = styled.div`
  position: relative;
  height: 100%;
  box-sizing: border-box;
  border: 1px solid #555;
  background: #fff;
  display: flex;
  align-items: center;
  justify-content: center;
  padding-right: 62px;
`;

const TerrainCanvas = styled.canvas`
  width: 758px;
  height: 545px;
  display: block;
`;

const Credit = styled.div`
  position: absolute;
  left: 6px;
  bottom: 0;
  line-height: 22px;
  color: #222;
`;

const StatusBar = styled.div`
  flex: 1;
  display: flex;
  justify-content: flex-end;
  align-items: center;
  gap: 14px;
  padding: 1px 16px 0 0;
`;

const StatusValue = styled.span`
  letter-spacing: .45px;
`;
